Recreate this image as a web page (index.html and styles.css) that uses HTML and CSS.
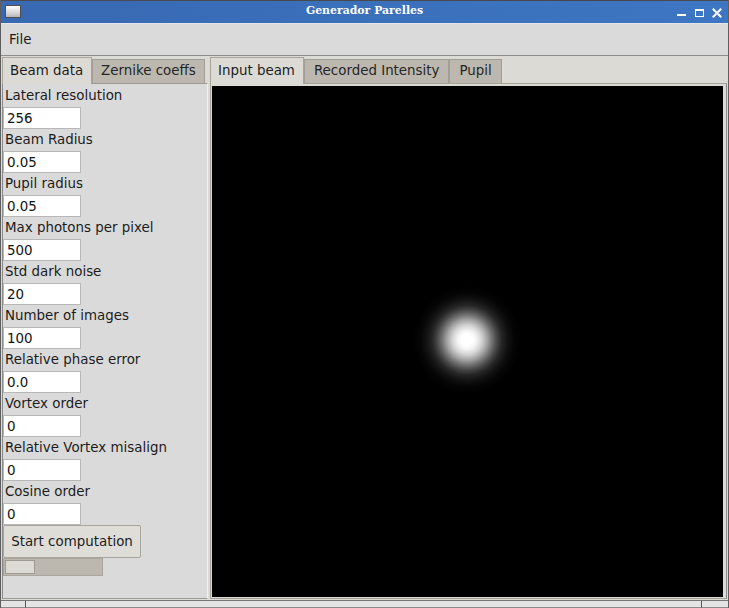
FILE: index.html
```html
<!DOCTYPE html>
<html>
<head>
<meta charset="utf-8">
<link rel="stylesheet" href="styles.css">
</head>
<body>
<div class="window">
  <div class="titlebar">
    <div class="tb-left"><span class="app-icon"></span></div>
    <div class="tb-title">Generador Parelles</div>
    <div class="tb-right">
      <svg class="controls" width="48" height="22" viewBox="0 0 48 22">
        <rect x="2" y="13" width="9" height="2" fill="#fff"/>
        <rect x="20.5" y="8.5" width="8" height="7" fill="none" stroke="#fff" stroke-width="1"/>
        <rect x="20" y="8" width="9" height="2" fill="#fff"/>
        <path d="M38.5 8.5 L45.5 15.5 M45.5 8.5 L38.5 15.5" stroke="#fff" stroke-width="2" stroke-linecap="square"/>
      </svg>
    </div>
  </div>
  <div class="menubar"><span class="menu-item">File</span></div>
  <div class="main">
    <div class="notebook nb-left">
      <div class="tabs">
        <div class="tab active">Beam data</div>
        <div class="tab">Zernike coeffs</div>
      </div>
      <div class="page form">
        <div class="label">Lateral resolution</div>
        <input class="field" type="text" value="256">
        <div class="label">Beam Radius</div>
        <input class="field" type="text" value="0.05">
        <div class="label">Pupil radius</div>
        <input class="field" type="text" value="0.05">
        <div class="label">Max photons per pixel</div>
        <input class="field" type="text" value="500">
        <div class="label">Std dark noise</div>
        <input class="field" type="text" value="20">
        <div class="label">Number of images</div>
        <input class="field" type="text" value="100">
        <div class="label">Relative phase error</div>
        <input class="field" type="text" value="0.0">
        <div class="label">Vortex order</div>
        <input class="field" type="text" value="0">
        <div class="label">Relative Vortex misalign</div>
        <input class="field" type="text" value="0">
        <div class="label">Cosine order</div>
        <input class="field" type="text" value="0">
        <button class="button">Start computation</button>
        <div class="slider"><div class="handle"></div></div>
      </div>
    </div>
    <div class="notebook nb-right">
      <div class="tabs">
        <div class="tab active">Input beam</div>
        <div class="tab">Recorded Intensity</div>
        <div class="tab">Pupil</div>
      </div>
      <div class="page view">
        <div class="canvas"></div>
      </div>
    </div>
  </div>
  <div class="statusbar">
    <div class="sb-cell sb-first"></div>
    <div class="sb-cell sb-mid"></div>
    <div class="sb-cell sb-last"></div>
  </div>
</div>
</body>
</html>
```
FILE: styles.css
```css
* { box-sizing: border-box; }
html, body { margin: 0; padding: 0; background: #dcdad5; }
body { font-family: "DejaVu Sans", sans-serif; font-size: 13.4px; color: #1c1c1c; }

.window {
  width: 729px;
  height: 608px;
  display: flex;
  flex-direction: column;
  border-left: 1px solid #5e5e5e;
  border-right: 1px solid #5e5e5e;
  background: #dcdad5;
  overflow: hidden;
}

.titlebar {
  height: 23px;
  flex: none;
  border-top: 1px solid #4a4a4a;
  background: linear-gradient(90deg, #3869b2, #3d76c3);
  display: grid;
  grid-template-columns: 1fr auto 1fr;
  align-items: center;
}
.tb-left { display: flex; align-items: center; padding-left: 4px; }
.app-icon {
  display: block;
  width: 16px;
  height: 13px;
  margin-top: -1px;
  border: 1px solid #4f4f4f;
  background: linear-gradient(#ffffff, #d8d8d8 60%, #b8b8b8);
}
.tb-title {
  font-family: "DejaVu Serif", serif;
  font-weight: bold;
  font-size: 10.9px;
  color: #ffffff;
  line-height: 20px;
  margin-top: -2px;
}
.tb-right { display: flex; justify-content: flex-end; padding-right: 5px; }
.controls { display: block; margin-top: -1px; }

.menubar {
  height: 33px;
  flex: none;
  border-top: 1px solid #e6e6e6;
  border-bottom: 1px solid #8c8c8c;
  background: #dadada;
  display: flex;
}
.menu-item {
  line-height: 31px;
  padding: 0 8px;
}

.main {
  flex: 1;
  display: flex;
  gap: 2px;
  padding: 1px 1px 1px 1px;
  min-height: 0;
}

.notebook { display: flex; flex-direction: column; }
.nb-left { width: 206px; flex: none; }
.nb-right { flex: 1; }

.tabs { display: flex; height: 26px; flex: none; }
.tab {
  margin-top: 2px;
  height: 24px;
  line-height: 22px;
  padding: 0 8px;
  border: 1px solid #a29e96;
  border-bottom: none;
  background: #bcb8af;
  color: #262626;
  white-space: nowrap;
}
.nb-right .tab { padding: 0 9px; }
.tab.active,
.nb-right .tab.active {
  margin-top: 0;
  height: 27px;
  padding: 2px 8px 0 7px;
  background: #dcdad5;
  border-color: #a8a49c;
  position: relative;
  z-index: 1;
  color: #1c1c1c;
}

.page {
  flex: 1;
  border: 1px solid #9c9a96;
  background: #dadada;
  min-height: 0;
}

.form {
  display: flex;
  flex-direction: column;
  align-items: flex-start;
  padding: 1px 0 0 0;
  border-left-color: #8a8a8a;
  border-right-color: #f0f0f0;
}
.label {
  height: 22px;
  line-height: 22px;
  padding-left: 2px;
  white-space: nowrap;
}
.field {
  width: 78px;
  height: 22px;
  margin: 0;
  padding: 0 3px;
  border: 1px solid #b8b8b8;
  background: #ffffff;
  font: inherit;
  color: #111;
  outline: none;
}
.button {
  width: 138px;
  height: 33px;
  margin: 0;
  padding: 0;
  border: 1px solid #a9a59d;
  border-radius: 2px;
  background: #dfddd8;
  font: inherit;
  color: #1c1c1c;
}
.slider {
  width: 100px;
  height: 18px;
  border: 1px solid #aaa69e;
  background: #bcb8af;
  padding: 1px;
}
.handle {
  width: 30px;
  height: 14px;
  border: 1px solid #9e9a92;
  background: #dcdad5;
}

.view {
  background: #dcdad5;
  padding: 1px;
  border-color: #a6a39d;
  border-right-color: #8a8a8a;
}
.canvas {
  width: 511px;
  height: 511px;
  margin-top: 1px;
  background:
    radial-gradient(circle at 255px 254px,
      #ffffff 0px, #ffffff 6px, #f0f0f0 10px, #d0d0d0 15px, #a4a4a4 20px,
      #727272 25px, #464646 30px, #252525 35px, #111111 41px, #050505 47px, #000000 54px);
}

.statusbar {
  height: 8px;
  flex: none;
  display: flex;
  border-top: 1px solid #767676;
  background: #e4e4e4;
}
.sb-cell { height: 100%; border-bottom: 1px solid #8a8a8a; }
.sb-first { width: 25px; border-right: 1px solid #555; }
.sb-mid { flex: 1; border-right: 1px solid #555; }
.sb-last { width: 26px; }
```
